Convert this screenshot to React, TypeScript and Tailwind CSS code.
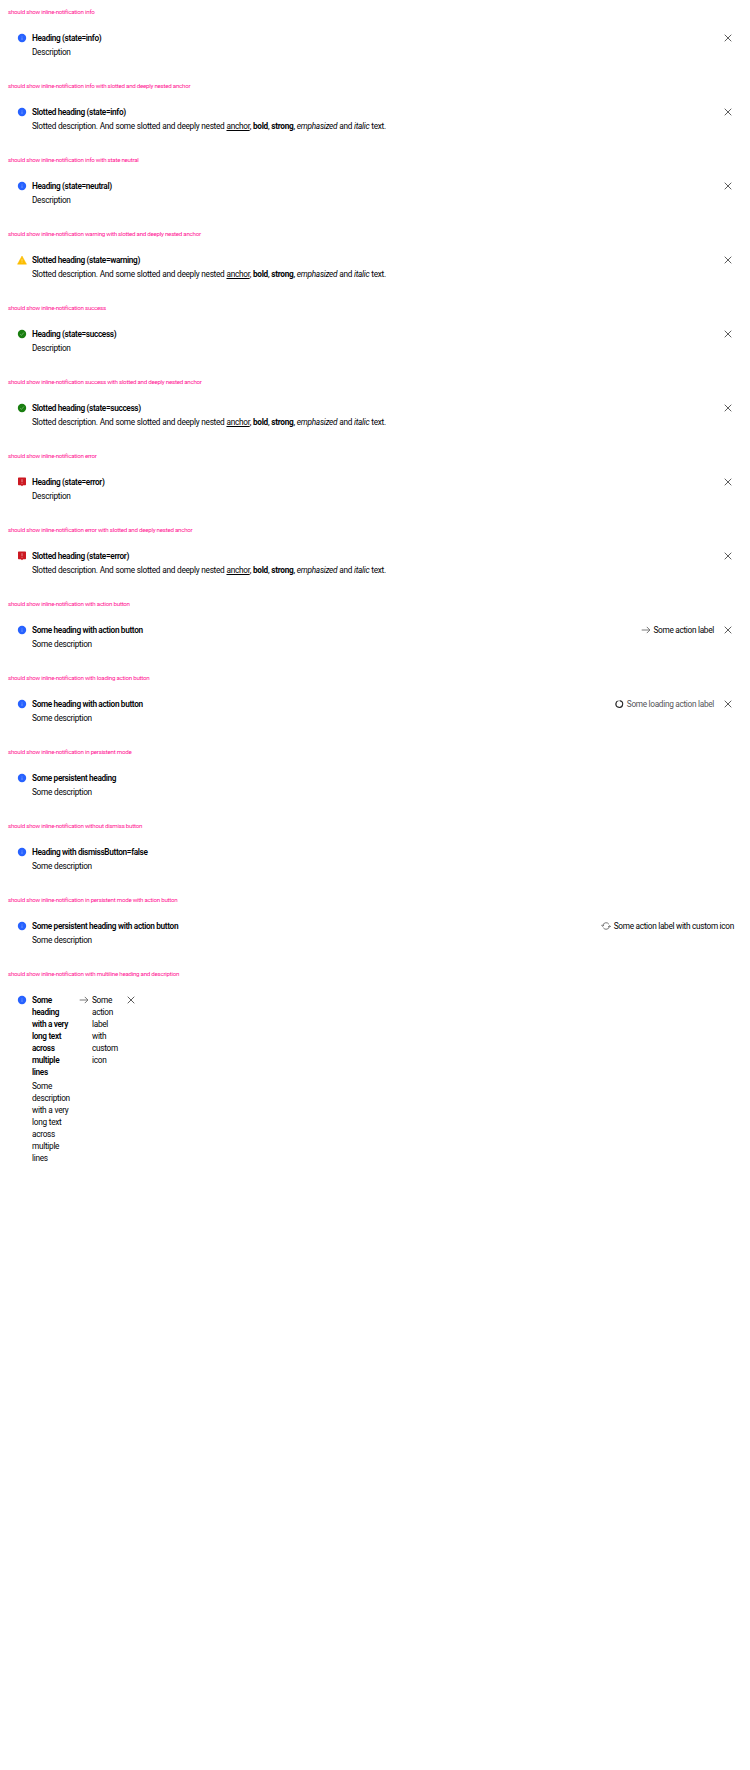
import React from 'react';

type State = 'info' | 'warning' | 'success' | 'error';
type ActionIcon = 'arrow' | 'spinner' | 'reset';

interface Item {
  title: string;
  state: State;
  heading: string;
  description?: string;
  action?: string;
  actionIcon?: ActionIcon;
  dismiss?: boolean;
  narrow?: boolean;
}

const items: Item[] = [
  { title: 'should show inline-notification info', state: 'info', heading: 'Heading (state=info)', description: 'Description' },
  { title: 'should show inline-notification info with slotted and deeply nested anchor', state: 'info', heading: 'Slotted heading (state=info)' },
  { title: 'should show inline-notification info with state neutral', state: 'info', heading: 'Heading (state=neutral)', description: 'Description' },
  { title: 'should show inline-notification warning with slotted and deeply nested anchor', state: 'warning', heading: 'Slotted heading (state=warning)' },
  { title: 'should show inline-notification success', state: 'success', heading: 'Heading (state=success)', description: 'Description' },
  { title: 'should show inline-notification success with slotted and deeply nested anchor', state: 'success', heading: 'Slotted heading (state=success)' },
  { title: 'should show inline-notification error', state: 'error', heading: 'Heading (state=error)', description: 'Description' },
  { title: 'should show inline-notification error with slotted and deeply nested anchor', state: 'error', heading: 'Slotted heading (state=error)' },
  { title: 'should show inline-notification with action button', state: 'info', heading: 'Some heading with action button', description: 'Some description', action: 'Some action label', actionIcon: 'arrow' },
  { title: 'should show inline-notification with loading action button', state: 'info', heading: 'Some heading with action button', description: 'Some description', action: 'Some loading action label', actionIcon: 'spinner' },
  { title: 'should show inline-notification in persistent mode', state: 'info', heading: 'Some persistent heading', description: 'Some description', dismiss: false },
  { title: 'should show inline-notification without dismiss button', state: 'info', heading: 'Heading with dismissButton=false', description: 'Some description', dismiss: false },
  { title: 'should show inline-notification in persistent mode with action button', state: 'info', heading: 'Some persistent heading with action button', description: 'Some description', action: 'Some action label with custom icon', actionIcon: 'reset', dismiss: false },
  { title: 'should show inline-notification with multiline heading and description', state: 'info', heading: 'Some heading with a very long text across multiple lines', description: 'Some description with a very long text across multiple lines', action: 'Some action label with custom icon', actionIcon: 'arrow', narrow: true },
];

function StateIcon({ state }: { state: State }) {
  return (
    <svg viewBox="0 0 12 12" className="size-3 shrink-0">
      {state === 'info' && (
        <>
          <circle cx="6" cy="6" r="4.2" fill="#2762ff" />
          <path d="M6 5.4v2.6M6 3.9v.7" stroke="#fff" strokeOpacity=".6" strokeWidth=".55" />
        </>
      )}
      {state === 'warning' && (
        <>
          <path d="M6 2 10.5 10.2H1.5Z" fill="#fcbd00" stroke="#fcbd00" strokeWidth=".5" strokeLinejoin="round" />
          <path d="M6 4.8v2.8M6 8.3v.7" stroke="#fff" strokeOpacity=".7" strokeWidth=".6" />
        </>
      )}
      {state === 'success' && (
        <>
          <circle cx="6" cy="6" r="4.2" fill="#197e10" />
          <path d="m4.2 6.2 1.2 1.2 2.5-2.9" fill="none" stroke="#fff" strokeOpacity=".6" strokeWidth=".55" />
        </>
      )}
      {state === 'error' && (
        <>
          <path d="M2.7 1.6h6.6q.7 0 .7.7v6.2q0 .7-.7.7H7.1L6 10.2 4.9 9.2H2.7Q2 9.2 2 8.5V2.3q0-.7.7-.7Z" fill="#cc1922" />
          <path d="M6 3.2v3M6 6.9v.8" stroke="#fff" strokeOpacity=".75" strokeWidth=".7" />
        </>
      )}
    </svg>
  );
}

function Glyph({ icon }: { icon: ActionIcon }) {
  return (
    <svg viewBox="0 0 12 12" className="size-3 shrink-0" fill="none" stroke="#555" strokeWidth=".8">
      {icon === 'arrow' && <path d="M1.7 6h8.1M6.8 2.9 9.9 6 6.8 9.1" />}
      {icon === 'spinner' && (
        <>
          <circle cx="6.3" cy="6" r="3.4" strokeWidth="1" stroke="#999" />
          <circle cx="6.3" cy="6" r="3.4" strokeWidth="1" stroke="#222" strokeDasharray="18.4 3" transform="rotate(-80 6.3 6)" />
        </>
      )}
      {icon === 'reset' && <path d="M2.7 5.9A3.4 3.4 0 0 1 8.9 4.2M9.5 6.1A3.4 3.4 0 0 1 3.3 7.8M1.3 5.2l1.4 1.2L4.1 5M8.1 7l1.4-1.4 1.4 1.2" />}
    </svg>
  );
}

function SlottedText() {
  return (
    <>
      Slotted description. And some slotted and deeply nested <a className="underline">anchor</a>, <b className="font-bold">bold</b>,{' '}
      <strong className="font-bold">strong</strong>, <em>emphasized</em> and <i>italic</i> text.
    </>
  );
}

function Notification({ item }: { item: Item }) {
  return (
    <section className={item.narrow ? '' : 'h-[74px]'}>
      <h2 className="whitespace-nowrap pl-2 pt-[6px] text-[6.2px] leading-3 tracking-[-0.265px] text-[#ff1493]">{item.title}</h2>
      <div className={item.narrow ? 'flex w-[138px] items-start pl-4 pt-[14px]' : 'flex items-start pl-4 pr-4 pt-[14px]'}>
        <StateIcon state={item.state} />
        <div className={item.narrow ? 'ml-1 w-[40px] shrink-0' : 'ml-1 grow'}>
          <h5 className="font-semibold tracking-[-0.35px]">{item.heading}</h5>
          <p className="mt-[2px] tracking-[-0.29px] [word-spacing:0.25px]">{item.description ?? <SlottedText />}</p>
        </div>
        {item.action && item.actionIcon && (
          <button
            className={
              item.narrow
                ? 'ml-[6px] flex w-[39px] shrink-0 items-start gap-[2px] text-left tracking-[-0.3px]'
                : item.actionIcon === 'spinner'
                  ? 'flex items-start gap-[2px] tracking-[-0.3px] text-[#535457]'
                  : 'flex items-start gap-[2px] tracking-[-0.3px]'
            }
          >
            <Glyph icon={item.actionIcon} />
            <span>{item.action}</span>
          </button>
        )}
        {item.dismiss !== false && (
          <button aria-label="Close" className="ml-2 shrink-0">
            <svg viewBox="0 0 12 12" className="size-3" fill="none" stroke="#555" strokeWidth=".95">
              <path d="m2.7 2.7 6.6 6.6M9.3 2.7 2.7 9.3" />
            </svg>
          </button>
        )}
      </div>
    </section>
  );
}

export default function App() {
  return (
    <main className="min-h-[1770px] bg-white font-['Roboto',sans-serif] text-[8.25px] leading-3 text-[#010205]">
      {items.map((item) => (
        <Notification key={item.title} item={item} />
      ))}
    </main>
  );
}
